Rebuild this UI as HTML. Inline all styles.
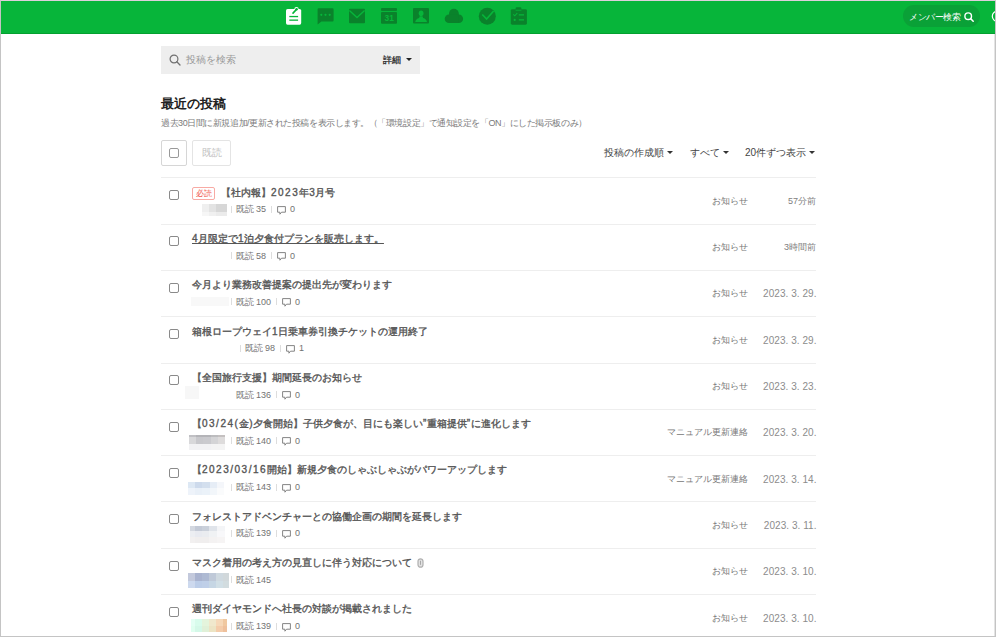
<!DOCTYPE html>
<html><head><meta charset="utf-8">
<style>
*{box-sizing:border-box;margin:0;padding:0}
html,body{width:996px;height:637px;overflow:hidden;background:#fff}
body{position:relative;font-family:"Liberation Sans",sans-serif;color:#333}
.frame{position:absolute;left:0;top:0;width:996px;height:637px;border-left:1px solid #c4c4c4;border-right:1px solid #c4c4c4;border-bottom:1px solid #c4c4c4;border-top:1px solid #ddd0da;pointer-events:none;z-index:10}
.hdr{position:absolute;left:0;top:1px;width:996px;height:33px;background:#07b53a;border-bottom:1px solid #04a030}
.ic{position:absolute;top:0;height:33px}
.pill{position:absolute;left:903px;top:5px;width:77px;height:22px;border-radius:11px;background:#0aa137;color:#fff;font-size:9px;letter-spacing:-0.5px;line-height:22px;padding-left:6px;padding-top:1px;white-space:nowrap}
.abs{position:absolute;white-space:nowrap}
.search{position:absolute;left:161px;top:46px;width:259px;height:28px;background:#eeeeee}
.ttl{position:absolute;left:161px;top:95px;font-size:13px;font-weight:bold;color:#222;line-height:18px}
.sub{position:absolute;left:161px;top:117px;font-size:9px;letter-spacing:-0.45px;color:#7a7a7a;line-height:13px;white-space:nowrap}
.btn{position:absolute;top:140px;height:26px;border:1px solid #d6d6d6;border-radius:2px;background:#fff}
.cb{position:absolute;width:10px;height:10px;border:1.3px solid #8a8a8a;border-radius:2px;background:#fff}
.sort{position:absolute;top:146px;font-size:10px;color:#444;line-height:14px;white-space:nowrap}
.tri{display:inline-block;width:0;height:0;border-left:3px solid transparent;border-right:3px solid transparent;border-top:3px solid #333;vertical-align:middle;margin-left:3px;position:relative;top:-1px}
.line{position:absolute;left:161px;width:655px;height:1px;background:#eeeeee}
.d{letter-spacing:1.5px}
.d1{letter-spacing:0.4px}
.rt{position:absolute;left:192px;font-size:10px;font-weight:normal;-webkit-text-stroke:0.35px #555;color:#555;line-height:14px;white-space:nowrap}
.meta{position:absolute;font-size:9px;color:#727272;line-height:12px;white-space:nowrap;display:flex;align-items:center;height:12px}
.cat{position:absolute;right:248px;font-size:9px;color:#777;line-height:12px;white-space:nowrap}
.dt{position:absolute;right:179.5px;letter-spacing:0.5px;font-size:9px;color:#808080;line-height:12px;white-space:nowrap}
.sep{display:inline-block;width:1px;height:7px;background:#ddd;vertical-align:middle}
.blur{position:absolute;overflow:visible;filter:blur(0.5px)}
.badge{position:absolute;left:192px;width:23px;height:13px;border:1px solid #f8aaa4;border-radius:2px;color:#f0554c;font-size:8px;line-height:11px;text-align:center;background:#fff}
</style></head><body>
<div class="hdr"></div>


<svg class="ic" style="left:0;width:996px" width="996" height="33" viewBox="0 0 996 33">
 <g>
  <rect x="286" y="9" width="15.2" height="15.7" rx="1.6" fill="#fff"/>
  <circle cx="296.5" cy="9.3" r="2.2" fill="#fff"/>
  <path d="M293 13.1 L296.5 9.4" stroke="#07b53a" stroke-width="1.6" stroke-linecap="round"/>
  <circle cx="296.6" cy="9.3" r="1.2" fill="#07b53a"/>
  <rect x="289.3" y="15.9" width="8.8" height="1.3" fill="#07b53a"/>
  <rect x="289.3" y="19.5" width="8.8" height="1.3" fill="#07b53a"/>
 </g>
 <g fill="#0a822b">
  <path d="M318.8 8.2 H332.4 Q333.6 8.2 333.6 9.4 V20.2 Q333.6 21.4 332.4 21.4 H321.4 L317.6 24.6 V9.4 Q317.6 8.2 318.8 8.2 Z"/>
  <rect x="349" y="8.7" width="16" height="14.5" rx="1"/>
  <rect x="381" y="8" width="16" height="2.9" rx="1"/>
  <rect x="381" y="12" width="16" height="11.8" rx="1"/>
  <rect x="413" y="8" width="16" height="15.6" rx="1"/>
  <circle cx="453.9" cy="13.6" r="4.9"/>
  <circle cx="449" cy="18.7" r="4.3"/>
  <circle cx="458.8" cy="18.7" r="4.3"/>
  <rect x="449" y="14.4" width="9.8" height="8.6"/>
  <circle cx="487.3" cy="16.25" r="8.5"/>
  <rect x="510.8" y="9.2" width="16.1" height="15.5" rx="1.4"/>
  <rect x="515.6" y="7.2" width="5.8" height="3.2" rx="1.3"/>
 </g>
 <g fill="#07b53a">
  <circle cx="321.3" cy="14.8" r="1.1"/><circle cx="325.5" cy="14.8" r="1.1"/><circle cx="329.7" cy="14.8" r="1.1"/>
 </g>
 <path d="M349.4 10.6 L357 17.6 L364.6 10.6" stroke="#07b53a" stroke-width="1.4" fill="none"/>
 <rect x="381" y="10.9" width="16" height="1.1" fill="#07b53a"/>
 <text x="389.2" y="21.3" text-anchor="middle" font-family="Liberation Sans" font-weight="bold" font-size="8.4" fill="#07b53a">31</text>
 <g fill="#07b53a">
  <ellipse cx="421.1" cy="13.3" rx="2.4" ry="2.8"/>
  <path d="M415.2 21.9 L427 21.9 Q426.4 18.8 423.1 17.9 L422.5 16.2 L419.7 16.2 L419.1 17.9 Q415.8 18.8 415.2 21.9 Z"/>
 </g>
 <path d="M482.3 14.5 L486.6 19 L493.6 11" stroke="#07b53a" stroke-width="1.7" fill="none"/>
 <rect x="515.6" y="9.8" width="5.8" height="0.8" fill="#07b53a"/>
 <path d="M513.3 14.4 L514.8 15.8 L517.3 13" stroke="#07b53a" stroke-width="1.1" fill="none"/>
 <rect x="518.8" y="14.2" width="5.2" height="1.3" fill="#07b53a"/>
 <circle cx="514.7" cy="19.9" r="1.1" fill="#07b53a"/>
 <rect x="518.8" y="19.2" width="5.2" height="1.3" fill="#07b53a"/>
</svg>

<div class="pill">メンバー検索<svg style="position:absolute;left:61px;top:7px" width="10" height="10" viewBox="0 0 10 10"><circle cx="4.2" cy="4.2" r="3.3" stroke="#fff" stroke-width="1.4" fill="none"/><path d="M6.6 6.6 L9.2 9.2" stroke="#fff" stroke-width="1.5" stroke-linecap="round"/></svg></div>
<svg class="abs" style="left:988px;top:8px" width="8" height="16" viewBox="0 0 8 16"><circle cx="9.4" cy="8.2" r="5.1" stroke="#fff" stroke-width="1.2" fill="none"/></svg>
<div class="search">
 <svg style="position:absolute;left:8px;top:8px" width="12" height="12" viewBox="0 0 12 12"><circle cx="5" cy="5" r="3.9" stroke="#707070" stroke-width="1.2" fill="none"/><path d="M7.8 7.8 L11 11" stroke="#707070" stroke-width="1.3" stroke-linecap="round"/></svg>
 <div class="abs" style="left:25px;top:7px;font-size:10px;line-height:14px;color:#999">投稿を検索</div>
 <div class="abs" style="left:222px;top:7px;font-size:9px;line-height:14px;color:#222;font-weight:normal;-webkit-text-stroke:0.25px #222">詳細</div>
 <div class="abs" style="left:245px;top:12px;width:0;height:0;border-left:3px solid transparent;border-right:3px solid transparent;border-top:3px solid #222"></div>
</div>
<div class="ttl">最近の投稿</div>
<div class="sub">過去30日間に新規追加/更新された投稿を表示します。（「環境設定」で通知設定を「ON」にした掲示板のみ）</div>
<div class="btn" style="left:161px;width:26px"><div class="cb" style="left:7px;top:7px;border-color:#999"></div></div>
<div class="btn" style="left:192px;width:39px;border-color:#e4e4e4;font-size:10px;color:#bdbdbd;line-height:24px;text-align:center">既読</div>
<div class="sort" style="left:604px">投稿の作成順<span class="tri"></span></div>
<div class="sort" style="left:690px">すべて<span class="tri"></span></div>
<div class="sort" style="left:745px">20件ずつ表示<span class="tri"></span></div>
<div class="line" style="top:177px"></div>

<div class="cb" style="left:169px;top:190.1px"></div>
<div class="badge" style="top:186.5px">必読</div>
<div class="rt" style="left:221px;top:185.6px">【社内報】<span class="d">2023</span>年<span class="d1">3</span>月号</div>
<div class="blur" style="left:202px;top:204px;width:25px;height:11.5px"><div style="display:flex;height:8px"><div style="width:7px;background:#efefef"></div><div style="width:7px;background:#e3e3e3"></div><div style="width:11px;background:#d7d7d7"></div></div><div style="display:flex;height:3.5px"><div style="width:7px;background:#f6f6f6"></div><div style="width:7px;background:#f0f0f0"></div><div style="width:11px;background:#ebebeb"></div></div></div>
<div class="meta" style="left:230.5px;top:203.3px"><span class="sep" style="margin-right:4px"></span>既読 35<span class="sep" style="margin:0 5px"></span><svg width="9" height="9" viewBox="0 0 9 9" style="margin-right:4px;position:relative;top:1px"><path d="M0.6 0.6 H8.4 V6.2 H4.6 L2.9 8.2 V6.2 H0.6 Z" stroke="#777" stroke-width="0.9" fill="none" stroke-linejoin="round"/></svg>0</div>
<div class="cat" style="top:194.8px">お知らせ</div>
<div class="dt" style="top:194.8px;letter-spacing:0;right:180px;">57分前</div>
<div class="line" style="top:223.6px"></div>
<div class="cb" style="left:169px;top:236.4px"></div>
<div class="rt" style="left:192px;top:231.9px;text-decoration:underline"><span class="d1">4</span>月限定で<span class="d1">1</span>泊夕食付プランを販売します。</div>
<div class="meta" style="left:230.5px;top:249.6px"><span class="sep" style="margin-right:4px"></span>既読 58<span class="sep" style="margin:0 5px"></span><svg width="9" height="9" viewBox="0 0 9 9" style="margin-right:4px;position:relative;top:1px"><path d="M0.6 0.6 H8.4 V6.2 H4.6 L2.9 8.2 V6.2 H0.6 Z" stroke="#777" stroke-width="0.9" fill="none" stroke-linejoin="round"/></svg>0</div>
<div class="cat" style="top:241.1px">お知らせ</div>
<div class="dt" style="top:241.1px;letter-spacing:0;right:180px;">3時間前</div>
<div class="line" style="top:269.9px"></div>
<div class="cb" style="left:169px;top:282.7px"></div>
<div class="rt" style="left:192px;top:278.2px">今月より業務改善提案の提出先が変わります</div>
<div class="blur" style="left:191px;top:297px;width:38px;height:9px"><div style="display:flex;height:9px"><div style="width:38px;background:#f8f8f8"></div></div></div>
<div class="meta" style="left:230.5px;top:295.9px"><span class="sep" style="margin-right:4px"></span>既読 100<span class="sep" style="margin:0 5px"></span><svg width="9" height="9" viewBox="0 0 9 9" style="margin-right:4px;position:relative;top:1px"><path d="M0.6 0.6 H8.4 V6.2 H4.6 L2.9 8.2 V6.2 H0.6 Z" stroke="#777" stroke-width="0.9" fill="none" stroke-linejoin="round"/></svg>0</div>
<div class="cat" style="top:287.4px">お知らせ</div>
<div class="dt" style="top:287.4px;font-size:10px;letter-spacing:0.05px;right:179.5px;margin-top:1px;color:#8c8c8c;">2023. 3. 29.</div>
<div class="line" style="top:316.2px"></div>
<div class="cb" style="left:169px;top:329.0px"></div>
<div class="rt" style="left:192px;top:324.5px">箱根ロープウェイ<span class="d1">1</span>日乗車券引換チケットの運用終了</div>
<div class="meta" style="left:239.5px;top:342.2px"><span class="sep" style="margin-right:4px"></span>既読 98<span class="sep" style="margin:0 5px"></span><svg width="9" height="9" viewBox="0 0 9 9" style="margin-right:4px;position:relative;top:1px"><path d="M0.6 0.6 H8.4 V6.2 H4.6 L2.9 8.2 V6.2 H0.6 Z" stroke="#777" stroke-width="0.9" fill="none" stroke-linejoin="round"/></svg>1</div>
<div class="cat" style="top:333.7px">お知らせ</div>
<div class="dt" style="top:333.7px;font-size:10px;letter-spacing:0.05px;right:179.5px;margin-top:1px;color:#8c8c8c;">2023. 3. 29.</div>
<div class="line" style="top:362.5px"></div>
<div class="cb" style="left:169px;top:375.3px"></div>
<div class="rt" style="left:192px;top:370.8px">【全国旅行支援】期間延長のお知らせ</div>
<div class="blur" style="left:185px;top:386px;width:14px;height:13px"><div style="display:flex;height:13px"><div style="width:14px;background:#f7f7f7"></div></div></div>
<div class="meta" style="left:235.5px;top:388.5px">既読 136<span class="sep" style="margin:0 5px"></span><svg width="9" height="9" viewBox="0 0 9 9" style="margin-right:4px;position:relative;top:1px"><path d="M0.6 0.6 H8.4 V6.2 H4.6 L2.9 8.2 V6.2 H0.6 Z" stroke="#777" stroke-width="0.9" fill="none" stroke-linejoin="round"/></svg>0</div>
<div class="cat" style="top:380.0px">お知らせ</div>
<div class="dt" style="top:380.0px;font-size:10px;letter-spacing:0.05px;right:179.5px;margin-top:1px;color:#8c8c8c;">2023. 3. 23.</div>
<div class="line" style="top:408.8px"></div>
<div class="cb" style="left:169px;top:421.6px"></div>
<div class="rt" style="left:192px;top:417.1px">【<span class="d">03/24(</span>金<span class="d1">)</span>夕食開始】子供夕食が、目にも楽しい<span class="d1">”</span>重箱提供<span class="d1">”</span>に進化します</div>
<div class="blur" style="left:189px;top:435px;width:36px;height:15px"><div style="display:flex;height:2px"><div style="width:7px;background:#c0c0c4"></div><div style="width:7px;background:#b4b4b8"></div><div style="width:8px;background:#b4b4b8"></div><div style="width:7px;background:#bcbcbe"></div><div style="width:7px;background:#c4c0c0"></div></div><div style="display:flex;height:7px"><div style="width:7px;background:#d8d8da"></div><div style="width:7px;background:#c8c8cc"></div><div style="width:8px;background:#cacace"></div><div style="width:7px;background:#d4d4d6"></div><div style="width:7px;background:#dedcdc"></div></div><div style="display:flex;height:6px"><div style="width:7px;background:#f2f2f4"></div><div style="width:7px;background:#f2f2f4"></div><div style="width:8px;background:#f2f2f4"></div><div style="width:7px;background:#f4f4f4"></div><div style="width:7px;background:#f4f4f4"></div></div></div>
<div class="meta" style="left:230.5px;top:434.8px"><span class="sep" style="margin-right:4px"></span>既読 140<span class="sep" style="margin:0 5px"></span><svg width="9" height="9" viewBox="0 0 9 9" style="margin-right:4px;position:relative;top:1px"><path d="M0.6 0.6 H8.4 V6.2 H4.6 L2.9 8.2 V6.2 H0.6 Z" stroke="#777" stroke-width="0.9" fill="none" stroke-linejoin="round"/></svg>0</div>
<div class="cat" style="top:426.3px">マニュアル更新連絡</div>
<div class="dt" style="top:426.3px;font-size:10px;letter-spacing:0.05px;right:179.5px;margin-top:1px;color:#8c8c8c;">2023. 3. 20.</div>
<div class="line" style="top:455.1px"></div>
<div class="cb" style="left:169px;top:467.9px"></div>
<div class="rt" style="left:192px;top:463.4px">【<span class="d">2023/03/16</span>開始】新規夕食のしゃぶしゃぶがパワーアップします</div>
<div class="blur" style="left:188px;top:482px;width:36px;height:13px"><div style="display:flex;height:6px"><div style="width:7px;background:#dde8f4"></div><div style="width:7px;background:#cddaec"></div><div style="width:8px;background:#d3dfee"></div><div style="width:7px;background:#e6edf6"></div><div style="width:7px;background:#f4f6fa"></div></div><div style="display:flex;height:7px"><div style="width:7px;background:#eef3fa"></div><div style="width:7px;background:#e9f0f8"></div><div style="width:8px;background:#ebf2f9"></div><div style="width:7px;background:#f2f6fa"></div><div style="width:7px;background:#fafbfc"></div></div></div>
<div class="meta" style="left:230.5px;top:481.1px"><span class="sep" style="margin-right:4px"></span>既読 143<span class="sep" style="margin:0 5px"></span><svg width="9" height="9" viewBox="0 0 9 9" style="margin-right:4px;position:relative;top:1px"><path d="M0.6 0.6 H8.4 V6.2 H4.6 L2.9 8.2 V6.2 H0.6 Z" stroke="#777" stroke-width="0.9" fill="none" stroke-linejoin="round"/></svg>0</div>
<div class="cat" style="top:472.6px">マニュアル更新連絡</div>
<div class="dt" style="top:472.6px;font-size:10px;letter-spacing:0.05px;right:179.5px;margin-top:1px;color:#8c8c8c;">2023. 3. 14.</div>
<div class="line" style="top:501.4px"></div>
<div class="cb" style="left:169px;top:514.2px"></div>
<div class="rt" style="left:192px;top:509.7px">フォレストアドベンチャーとの協働企画の期間を延長します</div>
<div class="blur" style="left:190px;top:526px;width:35px;height:17px"><div style="display:flex;height:5px"><div style="width:5px;background:#d4d8e0"></div><div style="width:7px;background:#c4cad6"></div><div style="width:7px;background:#cad0da"></div><div style="width:8px;background:#e0e4ea"></div><div style="width:8px;background:#f4f5f7"></div></div><div style="display:flex;height:6px"><div style="width:5px;background:#eceef2"></div><div style="width:7px;background:#e8eaf0"></div><div style="width:7px;background:#eaecf0"></div><div style="width:8px;background:#f0f2f4"></div><div style="width:8px;background:#f8f8fa"></div></div><div style="display:flex;height:6px"><div style="width:5px;background:#f2f0f0"></div><div style="width:7px;background:#f0eeee"></div><div style="width:7px;background:#f0eeee"></div><div style="width:8px;background:#f4f2f2"></div><div style="width:8px;background:#f6f4f4"></div></div></div>
<div class="meta" style="left:230.5px;top:527.4px"><span class="sep" style="margin-right:4px"></span>既読 139<span class="sep" style="margin:0 5px"></span><svg width="9" height="9" viewBox="0 0 9 9" style="margin-right:4px;position:relative;top:1px"><path d="M0.6 0.6 H8.4 V6.2 H4.6 L2.9 8.2 V6.2 H0.6 Z" stroke="#777" stroke-width="0.9" fill="none" stroke-linejoin="round"/></svg>0</div>
<div class="cat" style="top:518.9px">お知らせ</div>
<div class="dt" style="top:518.9px;font-size:10px;letter-spacing:0.05px;right:179.5px;margin-top:1px;color:#8c8c8c;">2023. 3. 11.</div>
<div class="line" style="top:547.7px"></div>
<div class="cb" style="left:169px;top:560.5px"></div>
<div class="rt" style="left:192px;top:556.0px">マスク着用の考え方の見直しに伴う対応について<svg style="margin-left:5px;vertical-align:-2px" width="7" height="10" viewBox="0 0 7 10"><rect x="1" y="0.8" width="5" height="8.4" rx="2.5" stroke="#b0b0b0" stroke-width="1.2" fill="#e2e2e2"/><path d="M3.5 2.8 V6.8" stroke="#a8a8a8" stroke-width="1"/></svg></div>
<div class="blur" style="left:188px;top:573px;width:41px;height:15px"><div style="display:flex;height:7.5px"><div style="width:7px;background:#c3c9dc"></div><div style="width:7px;background:#a9b3cf"></div><div style="width:7px;background:#aebad3"></div><div style="width:7px;background:#bfc9d8"></div><div style="width:7px;background:#cfd9e0"></div><div style="width:6px;background:#d1d8db"></div></div><div style="display:flex;height:7.5px"><div style="width:7px;background:#cdd9ee"></div><div style="width:7px;background:#bccde8"></div><div style="width:7px;background:#bfcfe8"></div><div style="width:7px;background:#c6d6e4"></div><div style="width:7px;background:#d1dfe6"></div><div style="width:6px;background:#d2dcdf"></div></div></div>
<div class="meta" style="left:230.5px;top:573.7px"><span class="sep" style="margin-right:4px"></span>既読 145</div>
<div class="cat" style="top:565.2px">お知らせ</div>
<div class="dt" style="top:565.2px;font-size:10px;letter-spacing:0.05px;right:179.5px;margin-top:1px;color:#8c8c8c;">2023. 3. 10.</div>
<div class="line" style="top:594.0px"></div>
<div class="cb" style="left:169px;top:606.8px"></div>
<div class="rt" style="left:192px;top:602.3px">週刊ダイヤモンドへ社長の対談が掲載されました</div>
<div class="blur" style="left:191px;top:619px;width:36px;height:13px"><div style="display:flex;height:6.5px"><div style="width:4px;background:#e4fff4"></div><div style="width:7px;background:#d8fcec"></div><div style="width:7px;background:#e4f4dc"></div><div style="width:7px;background:#f0e8cc"></div><div style="width:7px;background:#f6d8b8"></div><div style="width:4px;background:#f0c8a0"></div></div><div style="display:flex;height:6.5px"><div style="width:4px;background:#e0fff0"></div><div style="width:7px;background:#d4f8e8"></div><div style="width:7px;background:#e0f0d8"></div><div style="width:7px;background:#ece4c4"></div><div style="width:7px;background:#f4ccaa"></div><div style="width:4px;background:#eec09c"></div></div></div>
<div class="meta" style="left:230.5px;top:620.0px"><span class="sep" style="margin-right:4px"></span>既読 139<span class="sep" style="margin:0 5px"></span><svg width="9" height="9" viewBox="0 0 9 9" style="margin-right:4px;position:relative;top:1px"><path d="M0.6 0.6 H8.4 V6.2 H4.6 L2.9 8.2 V6.2 H0.6 Z" stroke="#777" stroke-width="0.9" fill="none" stroke-linejoin="round"/></svg>0</div>
<div class="cat" style="top:611.5px">お知らせ</div>
<div class="dt" style="top:611.5px;font-size:10px;letter-spacing:0.05px;right:179.5px;margin-top:1px;color:#8c8c8c;">2023. 3. 10.</div>
<div class="line" style="top:640.3px"></div>
<div style="position:absolute;left:994px;top:34px;width:1px;height:602px;background:#e4e4e4"></div>
<div class="frame"></div>
</body></html>
